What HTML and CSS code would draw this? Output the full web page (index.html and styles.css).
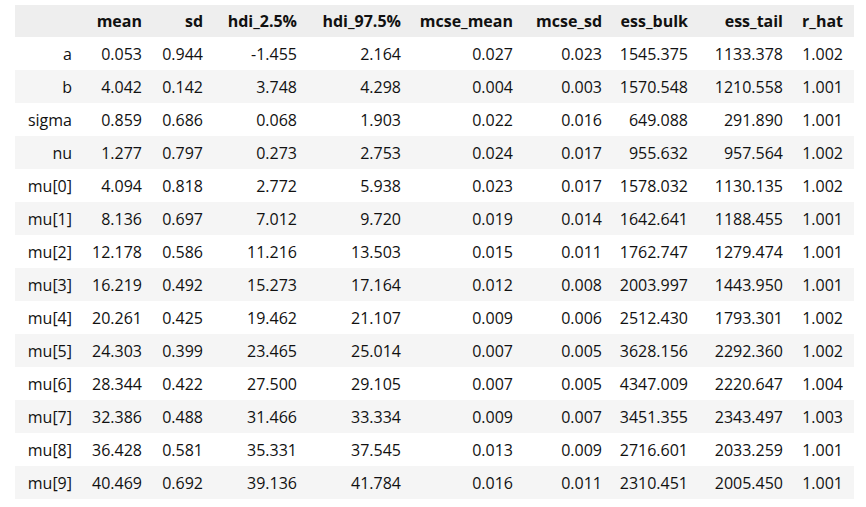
FILE: index.html
```html
<!DOCTYPE html>
<html>
<head>
<meta charset="utf-8">
<link rel="stylesheet" href="styles.css">
</head>
<body>
<table class="df">
<colgroup>
<col class="c0"><col class="c1"><col class="c2"><col class="c3"><col class="c4"><col class="c5"><col class="c6"><col class="c7"><col class="c8"><col class="c9">
</colgroup>
<thead>
<tr><th></th><th>mean</th><th>sd</th><th>hdi_2.5%</th><th>hdi_97.5%</th><th>mcse_mean</th><th>mcse_sd</th><th>ess_bulk</th><th>ess_tail</th><th>r_hat</th></tr>
</thead>
<tbody>
<tr><th>a</th><td>0.053</td><td>0.944</td><td>-1.455</td><td>2.164</td><td>0.027</td><td>0.023</td><td>1545.375</td><td>1133.378</td><td>1.002</td></tr>
<tr><th>b</th><td>4.042</td><td>0.142</td><td>3.748</td><td>4.298</td><td>0.004</td><td>0.003</td><td>1570.548</td><td>1210.558</td><td>1.001</td></tr>
<tr><th>sigma</th><td>0.859</td><td>0.686</td><td>0.068</td><td>1.903</td><td>0.022</td><td>0.016</td><td>649.088</td><td>291.890</td><td>1.001</td></tr>
<tr><th>nu</th><td>1.277</td><td>0.797</td><td>0.273</td><td>2.753</td><td>0.024</td><td>0.017</td><td>955.632</td><td>957.564</td><td>1.002</td></tr>
<tr><th>mu[0]</th><td>4.094</td><td>0.818</td><td>2.772</td><td>5.938</td><td>0.023</td><td>0.017</td><td>1578.032</td><td>1130.135</td><td>1.002</td></tr>
<tr><th>mu[1]</th><td>8.136</td><td>0.697</td><td>7.012</td><td>9.720</td><td>0.019</td><td>0.014</td><td>1642.641</td><td>1188.455</td><td>1.001</td></tr>
<tr><th>mu[2]</th><td>12.178</td><td>0.586</td><td>11.216</td><td>13.503</td><td>0.015</td><td>0.011</td><td>1762.747</td><td>1279.474</td><td>1.001</td></tr>
<tr><th>mu[3]</th><td>16.219</td><td>0.492</td><td>15.273</td><td>17.164</td><td>0.012</td><td>0.008</td><td>2003.997</td><td>1443.950</td><td>1.001</td></tr>
<tr><th>mu[4]</th><td>20.261</td><td>0.425</td><td>19.462</td><td>21.107</td><td>0.009</td><td>0.006</td><td>2512.430</td><td>1793.301</td><td>1.002</td></tr>
<tr><th>mu[5]</th><td>24.303</td><td>0.399</td><td>23.465</td><td>25.014</td><td>0.007</td><td>0.005</td><td>3628.156</td><td>2292.360</td><td>1.002</td></tr>
<tr><th>mu[6]</th><td>28.344</td><td>0.422</td><td>27.500</td><td>29.105</td><td>0.007</td><td>0.005</td><td>4347.009</td><td>2220.647</td><td>1.004</td></tr>
<tr><th>mu[7]</th><td>32.386</td><td>0.488</td><td>31.466</td><td>33.334</td><td>0.009</td><td>0.007</td><td>3451.355</td><td>2343.497</td><td>1.003</td></tr>
<tr><th>mu[8]</th><td>36.428</td><td>0.581</td><td>35.331</td><td>37.545</td><td>0.013</td><td>0.009</td><td>2716.601</td><td>2033.259</td><td>1.001</td></tr>
<tr><th>mu[9]</th><td>40.469</td><td>0.692</td><td>39.136</td><td>41.784</td><td>0.016</td><td>0.011</td><td>2310.451</td><td>2005.450</td><td>1.001</td></tr>
</tbody>
</table>
</body>
</html>
```
FILE: styles.css
```css
html, body {
  margin: 0;
  padding: 0;
  background: #ffffff;
}
body {
  padding: 5px 0 0 15px;
  font-family: "Open Sans", "Noto Sans", sans-serif;
  font-size: 16px;
  color: #111111;
}
.df {
  border-collapse: collapse;
  border-spacing: 0;
  table-layout: fixed;
  width: 839px;
}
.c0 { width: 68px; }
.c1 { width: 70px; }
.c2 { width: 61px; }
.c3 { width: 94px; }
.c4 { width: 104px; }
.c5 { width: 112px; }
.c6 { width: 89px; }
.c7 { width: 86px; }
.c8 { width: 95px; }
.c9 { width: 60px; }
.df th,
.df td {
  padding: 0 11px 0 0;
  text-align: right;
  white-space: nowrap;
  vertical-align: middle;
}
.df thead th {
  height: 32px;
  font-weight: 700;
  background: #eeeeee;
}
.df tbody tr {
  height: 33px;
}
.df tbody th {
  font-weight: 400;
}
.df tbody tr:nth-child(even) {
  background: #f5f5f5;
}
```
